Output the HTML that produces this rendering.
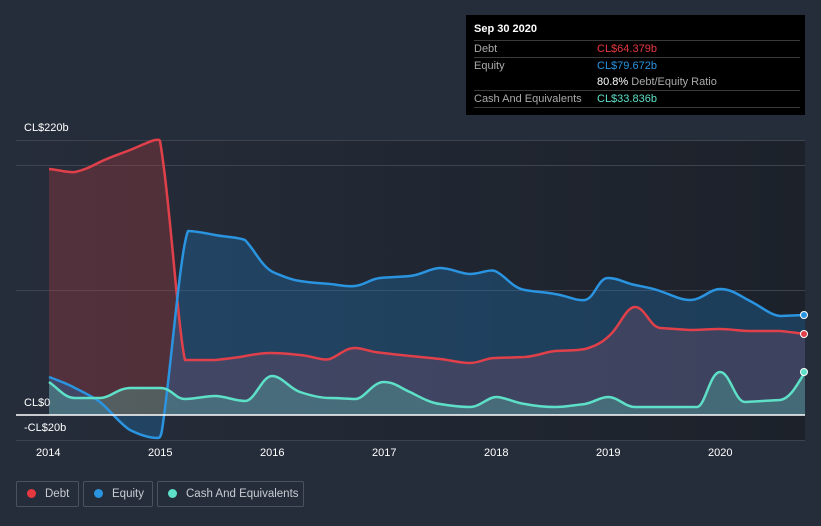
<!DOCTYPE html><html><head><style>
body{margin:0;width:821px;height:526px;background:#262d3a;font-family:"Liberation Sans",sans-serif;overflow:hidden;position:relative}
.t{position:absolute;left:466px;top:15px;width:339px;height:100px;background:#000;color:#fff;font-size:11px}
.r{position:absolute;left:8px;width:326px;border-top:1px solid #3a3a3a;height:16px;line-height:16px}
.r span{position:absolute;left:123px}
.lbl{position:absolute;color:#fff;font-size:11px}
.lg{position:absolute;top:481px;height:26px;border:1px solid #4a5260;border-radius:2px;color:#c8ccd2;font-size:11.5px;line-height:24px;box-sizing:border-box;white-space:nowrap}
.lg i{display:inline-block;width:9px;height:9px;border-radius:50%;margin:0 9px 0 10px;vertical-align:-1px}
</style></head><body>
<svg width="821" height="526" style="position:absolute;left:0;top:0">
<defs><linearGradient id="bg" x1="0" x2="1"><stop offset="0" stop-color="#262d3a"/><stop offset="1" stop-color="#1c212a"/></linearGradient></defs>
<rect x="16" y="140" width="789" height="300" fill="url(#bg)"/>
<g stroke="#3d4450" stroke-width="1"><line x1="16" y1="140.5" x2="805" y2="140.5"/><line x1="16" y1="165.5" x2="805" y2="165.5"/><line x1="16" y1="290.5" x2="805" y2="290.5"/><line x1="16" y1="440.5" x2="805" y2="440.5"/></g>
<path d="M49,169 C60,170 68,173 75,172 C85,170 92,166 100,162 C110,157 120,154 130,150 C140,146 150,141 155,140 C158,140 159,139 160,141 C170,200 178,330 185,360 L215,360 C225,359 232,358 240,357 C250,355 260,353 270,353 C282,353 290,354 300,355 C312,356 322,361 330,359 C340,355 345,348 355,348 C362,348 368,351 375,352 C390,354 400,355 410,356 C422,357 430,358 440,359 C450,360 460,363 470,363 C480,363 485,358 495,358 L525,357 C538,356 545,352 555,351 C568,350 575,351 585,349 C596,346 603,342 610,335 C620,326 626,307 635,307 C645,307 650,327 660,328 L690,330 C700,330 710,329 720,329 C730,329 740,331 750,331 L780,331 C790,332 797,333 805,334 L805,415 L49,415Z" fill="rgba(200,60,70,0.28)"/>
<path d="M49,377 C60,381 68,384 75,388 C85,393 92,396 100,402 C110,410 120,424 130,430 C140,435 150,438 158,438 C160,438 161,436 162,430 C170,380 180,250 188,231 C195,231 205,233 215,235 C225,237 238,237 245,240 C255,250 262,268 275,273 C285,277 292,280 300,281 C312,283 320,283 330,284 C340,285 347,287 355,286 C365,285 370,279 380,278 C390,277 400,277 410,276 C422,275 430,268 440,268 C452,268 460,274 470,274 C480,274 488,269 495,271 C505,275 512,288 525,290 C535,292 545,292 555,294 C568,296 575,301 585,300 C595,298 598,278 608,278 C618,278 625,283 635,285 C645,287 652,288 660,291 C672,295 680,300 690,300 C702,300 710,289 720,289 C732,289 740,296 750,301 C762,307 770,315 780,316 L805,315 L805,415 L49,415Z" fill="rgba(30,120,190,0.32)"/>
<path d="M49,382 C60,390 65,398 75,398 L100,398 C110,398 118,388 130,388 L160,388 C172,388 175,399 185,399 C195,399 205,396 215,396 C225,396 235,401 245,401 C255,401 262,376 272,376 C282,376 290,389 300,392 C312,396 322,398 330,398 C342,398 348,399 355,399 C365,399 372,382 384,382 C395,382 402,389 410,392 C420,397 430,403 440,404 C452,406 460,407 470,407 C480,407 488,397 496,397 C505,397 515,403 525,404 C535,406 545,407 555,407 C565,407 575,405 585,404 C595,402 600,397 608,397 C618,397 625,407 635,407 L697,407 C705,407 710,372 720,372 C730,372 735,402 745,402 L780,400 C790,399 797,385 805,372 L805,415 L49,415Z" fill="rgba(90,200,180,0.3)"/>
<g fill="none" stroke-width="2.5" stroke-linejoin="round">
<path d="M49,169 C60,170 68,173 75,172 C85,170 92,166 100,162 C110,157 120,154 130,150 C140,146 150,141 155,140 C158,140 159,139 160,141 C170,200 178,330 185,360 L215,360 C225,359 232,358 240,357 C250,355 260,353 270,353 C282,353 290,354 300,355 C312,356 322,361 330,359 C340,355 345,348 355,348 C362,348 368,351 375,352 C390,354 400,355 410,356 C422,357 430,358 440,359 C450,360 460,363 470,363 C480,363 485,358 495,358 L525,357 C538,356 545,352 555,351 C568,350 575,351 585,349 C596,346 603,342 610,335 C620,326 626,307 635,307 C645,307 650,327 660,328 L690,330 C700,330 710,329 720,329 C730,329 740,331 750,331 L780,331 C790,332 797,333 805,334" stroke="#e0404a"/>
<path d="M49,377 C60,381 68,384 75,388 C85,393 92,396 100,402 C110,410 120,424 130,430 C140,435 150,438 158,438 C160,438 161,436 162,430 C170,380 180,250 188,231 C195,231 205,233 215,235 C225,237 238,237 245,240 C255,250 262,268 275,273 C285,277 292,280 300,281 C312,283 320,283 330,284 C340,285 347,287 355,286 C365,285 370,279 380,278 C390,277 400,277 410,276 C422,275 430,268 440,268 C452,268 460,274 470,274 C480,274 488,269 495,271 C505,275 512,288 525,290 C535,292 545,292 555,294 C568,296 575,301 585,300 C595,298 598,278 608,278 C618,278 625,283 635,285 C645,287 652,288 660,291 C672,295 680,300 690,300 C702,300 710,289 720,289 C732,289 740,296 750,301 C762,307 770,315 780,316 L805,315" stroke="#2a94e0"/>
<path d="M49,382 C60,390 65,398 75,398 L100,398 C110,398 118,388 130,388 L160,388 C172,388 175,399 185,399 C195,399 205,396 215,396 C225,396 235,401 245,401 C255,401 262,376 272,376 C282,376 290,389 300,392 C312,396 322,398 330,398 C342,398 348,399 355,399 C365,399 372,382 384,382 C395,382 402,389 410,392 C420,397 430,403 440,404 C452,406 460,407 470,407 C480,407 488,397 496,397 C505,397 515,403 525,404 C535,406 545,407 555,407 C565,407 575,405 585,404 C595,402 600,397 608,397 C618,397 625,407 635,407 L697,407 C705,407 710,372 720,372 C730,372 735,402 745,402 L780,400 C790,399 797,385 805,372" stroke="#5ee0c8"/>
</g>
<line x1="16" y1="415" x2="805" y2="415" stroke="#fff" stroke-width="1.5"/>
<circle cx="804" cy="334" r="3.5" fill="#e0404a" stroke="#fff"/><circle cx="804" cy="315" r="3.5" fill="#2a94e0" stroke="#fff"/><circle cx="804" cy="372" r="3.5" fill="#5ee0c8" stroke="#fff"/>
</svg>
<div class="lbl" style="left:24px;top:122px">CL$220b</div>
<div class="lbl" style="left:24px;top:397px">CL$0</div>
<div class="lbl" style="left:24px;top:422px">-CL$20b</div>
<div class="lbl" style="left:36px;top:447px">2014</div><div class="lbl" style="left:148px;top:447px">2015</div><div class="lbl" style="left:260px;top:447px">2016</div><div class="lbl" style="left:372px;top:447px">2017</div><div class="lbl" style="left:484px;top:447px">2018</div><div class="lbl" style="left:596px;top:447px">2019</div><div class="lbl" style="left:708px;top:447px">2020</div>
<div class="t">
<div style="position:absolute;left:8px;top:8px;font-weight:bold">Sep 30 2020</div>
<div class="r" style="top:25px;color:#aaa">Debt<span style="color:#e5383f">CL$64.379b</span></div>
<div class="r" style="top:42px;color:#aaa">Equity<span style="color:#2a94e0">CL$79.672b</span></div>
<div class="r" style="top:59px;border:0;color:#aaa"><span><b style="color:#fff;font-weight:normal">80.8%</b> Debt/Equity Ratio</span></div>
<div class="r" style="top:75px;color:#aaa">Cash And Equivalents<span style="color:#5ee0c8">CL$33.836b</span></div>
<div class="r" style="top:92px;height:0"></div>
</div>
<div class="lg" style="left:16px;width:63px"><i style="background:#e5383f"></i>Debt</div>
<div class="lg" style="left:83px;width:70px"><i style="background:#2a94e0"></i>Equity</div>
<div class="lg" style="left:157px;width:147px"><i style="background:#5ee0c8"></i>Cash And Equivalents</div>
</body></html>
